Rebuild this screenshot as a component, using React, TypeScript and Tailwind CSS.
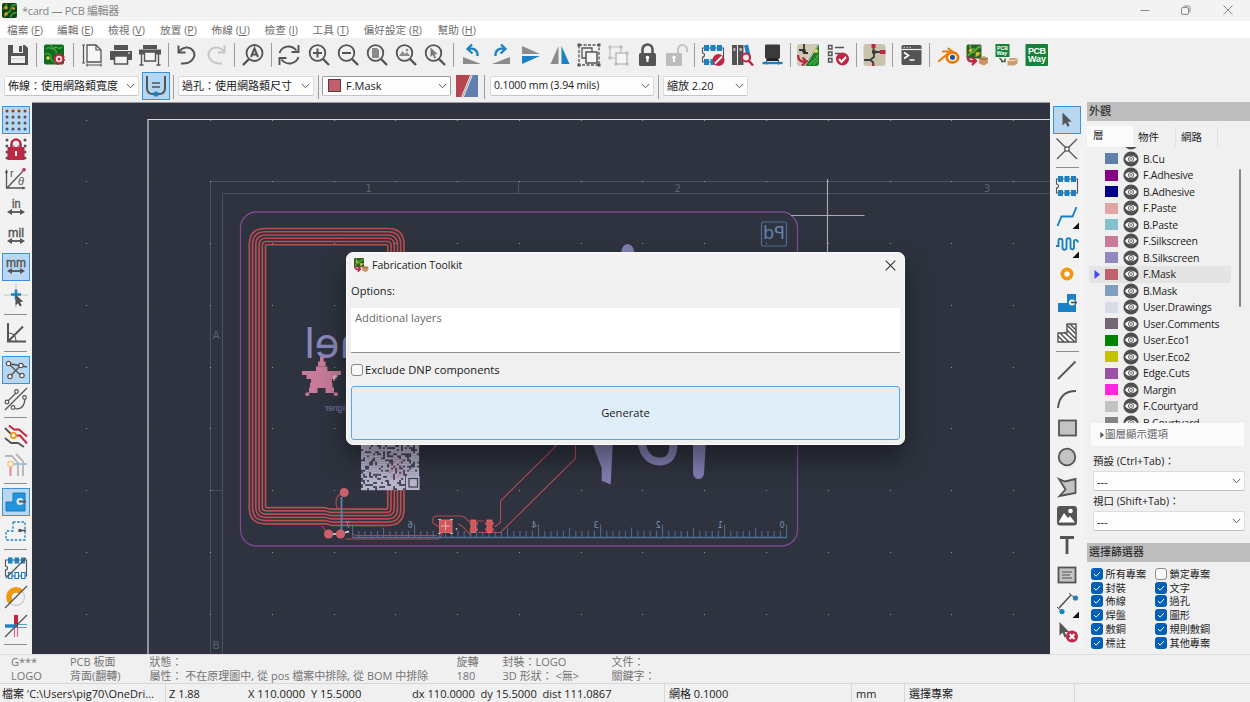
import React from "react";

const D = "#545454";
const B = "#1a81c4";
const R = "#bf2641";

type Kids = { children?: React.ReactNode };

function Ic({ children }: Kids) {
  return (
    <svg width="24" height="24" viewBox="0 0 24 24" fill="none" className="block shrink-0">
      {children}
    </svg>
  );
}

/* ---------- top toolbar icons ---------- */
const BoardArt = () => (
  <>
    <rect x="1" y="1.500" width="20" height="20" rx="2" fill="#0d6b1f" />
    <path d="M3 6c4-4 5 2 8-1s4 3 8-1M2 12c3-4 6 0 6 3s3 4 5 5M8 2c0 5 7 3 5 9" stroke="#46a63c" strokeWidth="1.300" />
    <circle cx="5" cy="15" r="1.800" fill="#e5d25c" />
  </>
);
const Magnifier = ({ children }: Kids) => (
  <Ic>
    <circle cx="10.500" cy="10" r="7.800" stroke={D} strokeWidth="1.800" />
    <path d="M16 16l6 6" stroke={D} strokeWidth="2.400" />
    {children}
  </Ic>
);
const Save = () => (
  <Ic>
    <path d="M2 2h17l3 3v17H2z" fill={D} />
    <path d="M7 2h10v8H7z" fill="#f0f0f0" />
    <path d="M13 3h3v6h-3z" fill={D} />
    <path d="M5 13h14v7H5z" fill="#f0f0f0" />
    <path d="M5 15h14v1.500H5z" fill={D} opacity=".15" />
  </Ic>
);
const BoardSetup = () => (
  <Ic>
    <BoardArt />
    <circle cx="16" cy="16" r="4" fill="#f7dfe2" stroke={R} strokeWidth="1.600" />
    <circle cx="16" cy="16" r="5.200" stroke={R} strokeWidth="1.600" strokeDasharray="2.040 2.040" />
    <circle cx="16" cy="16" r="1.500" fill={R} />
  </Ic>
);
const PageSet = () => (
  <Ic>
    <path d="M7 2h9l5 5v12H7z" stroke={D} strokeWidth="1.300" fill="#f6f6f6" />
    <path d="M16 2v5h5M3.500 2v18M2 2h3M2 20h3M7 22h14M7 20.500v3M21 20.500v3" stroke={D} strokeWidth="1.200" />
  </Ic>
);
const Print = () => (
  <Ic>
    <path d="M5 2h14v5H5z" fill={D} />
    <path d="M1 8h22v9H1z" fill={D} />
    <path d="M5.500 13h13v8h-13z" fill="#f3f3f3" stroke={D} strokeWidth="1.500" />
    <path d="M19 10h2" stroke="#fff" />
  </Ic>
);
const Plot = () => (
  <Ic>
    <path d="M5 2h14v4H5z" fill={D} />
    <path d="M1 6.500h22v5H1z" fill={D} />
    <path d="M6.500 9h11v9h-11z" fill="#f3f3f3" stroke={D} strokeWidth="1.400" />
    <path d="M3.500 11v11M20.500 11v11M1.500 22h4M18.500 22h4" stroke={D} strokeWidth="1.400" />
  </Ic>
);
const Undo = () => (
  <Ic>
    <path d="M3.500 2.500v7h7" stroke={D} strokeWidth="2" />
    <path d="M4 9C7 4 14 3 17.500 7c5 6-1 14.500-11.500 13.500" stroke={D} strokeWidth="2" />
  </Ic>
);
const Redo = () => (
  <svg width="24" height="24" viewBox="0 0 24 24" fill="none" className="block -scale-x-100">
    <path d="M3.500 2.500v7h7" stroke="#c6c6c6" strokeWidth="2" />
    <path d="M4 9C7 4 14 3 17.500 7c5 6-1 14.500-11.500 13.500" stroke="#c6c6c6" strokeWidth="2" />
  </svg>
);
const Find = () => (
  <Ic>
    <circle cx="13.500" cy="10" r="8" stroke={D} strokeWidth="1.800" />
    <path d="M8 16l-6 6" stroke={D} strokeWidth="2.400" />
    <path d="M10 14l3.500-8.500L17 14M11.300 11.500h4.500" stroke={D} strokeWidth="2" />
  </Ic>
);
const Refresh = () => (
  <Ic>
    <path d="M2.500 10C5 3 14 1 19.500 7.500M21.500 14C19 21 10 23 4.500 16.500" stroke={D} strokeWidth="1.900" />
    <path d="M21.500 2v7h-7M2.500 22v-7h7" stroke={D} strokeWidth="1.900" />
  </Ic>
);
const ZoomIn = () => <Magnifier><path d="M6 10h9M10.500 5.500v9" stroke={D} strokeWidth="2" /></Magnifier>;
const ZoomOut = () => <Magnifier><path d="M6 10h9" stroke={D} strokeWidth="2" /></Magnifier>;
const ZoomPage = () => <Magnifier><path d="M7 5h5l2 2v8H7z" fill="#8b8b8b" /></Magnifier>;
const ZoomObj = () => <Magnifier><path d="M5 13l3.500-5 2.500 3 2-2 3 4z" fill="#8b8b8b" /><circle cx="13" cy="7" r="1.300" fill="#8b8b8b" /></Magnifier>;
const ZoomSel = () => <Magnifier><path d="M7.500 4.500v9.500l2.300-2 1.700 3.500 1.700-.8-1.700-3.300 3-.4z" fill="#7b7b7b" /></Magnifier>;
const RotCCW = () => (
  <Ic>
    <path d="M3 14v7h18z" fill="#8b8b8b" />
    <path d="M17.500 13c.5-6-4-8.500-9-7" stroke={B} strokeWidth="2.300" />
    <path d="M12 1.500L7.500 6l5 4.500" stroke={B} strokeWidth="2.300" />
  </Ic>
);
const RotCW = () => (
  <Ic>
    <path d="M21 14v7H3z" fill="#8b8b8b" />
    <path d="M6.500 13c-.5-6 4-8.500 9-7" stroke={B} strokeWidth="2.300" />
    <path d="M12 1.500L16.500 6l-5 4.500" stroke={B} strokeWidth="2.300" />
  </Ic>
);
const FlipV = () => <Ic><path d="M3 3v8h18z" fill="#8b8b8b" /><path d="M3 21v-8h18z" fill={B} /></Ic>;
const FlipH = () => <Ic><path d="M2.500 21h8V3z" fill="#8b8b8b" /><path d="M21.500 21h-8V3z" fill={B} /></Ic>;
const Group = () => (
  <Ic>
    <path d="M2 2h20v20H2z" stroke={D} strokeWidth="1.300" strokeDasharray="3 1.500" />
    <path d="M5 5h10v10H5z" fill="#f0f0f0" stroke={D} strokeWidth="1.300" />
    <path d="M9 9h11v11H9z" fill="#f5f5f5" stroke={D} strokeWidth="1.500" />
    <path d="M.5.500h3v3h-3zM20.500.500h3v3h-3zM.5 20.500h3v3h-3zM20.500 20.500h3v3h-3z" fill={D} />
  </Ic>
);
const Ungroup = () => (
  <Ic>
    <path d="M4 4h11v11H4z" fill="#f0f0f0" stroke="#bdbdbd" strokeWidth="1.200" />
    <path d="M10 10h11v11H10z" fill="#f5f5f5" stroke="#bdbdbd" strokeWidth="1.500" />
    <path d="M2.500 2.500h3v3h-3zM13.500 2.500h3v3h-3zM2.500 13.500h3v3h-3zM19.500 8.500h3v3h-3zM8.500 19.500h3v3h-3zM19.500 19.500h3v3h-3z" fill="#bdbdbd" />
  </Ic>
);
const Lock = () => (
  <Ic>
    <path d="M7.500 11V6.500a5 5 0 0110 0V11" stroke={D} strokeWidth="2.600" />
    <rect x="4" y="10" width="17" height="13" rx="1.500" fill={D} />
    <path d="M12.500 14v5" stroke="#fff" strokeWidth="2" />
    <circle cx="12.500" cy="14.500" r="1.800" fill="#fff" />
  </Ic>
);
const Unlock = () => (
  <Ic>
    <path d="M14 11V6.500a4.500 4.500 0 019 0V9" stroke="#c2c2c2" strokeWidth="2" />
    <rect x="2" y="10" width="16" height="13" rx="1.500" fill="#bcbcbc" />
    <path d="M10 14v5" stroke="#fff" strokeWidth="2" />
    <circle cx="10" cy="14.500" r="1.800" fill="#fff" />
  </Ic>
);
const FpBody = () => (
  <>
    <path d="M1.500 5v5a2 2 0 010 4v5h21V5z" stroke={D} strokeWidth="1.100" />
    <path d="M3 2h5v6H3zM9.500 2h5v6h-5zM16 2h5v6h-5zM3 16h5v6H3zM9.500 16h5v6h-5zM16 16h5v6h-5z" fill={B} />
  </>
);
const FpEdit = () => (
  <Ic>
    <FpBody />
    <circle cx="17.500" cy="17" r="6" fill={R} />
    <path d="M14 20.500l7-7" stroke="#fff" strokeWidth="1.800" />
  </Ic>
);
const Library = () => (
  <Ic>
    <path d="M2 2h5v20H2zM8 2h5.500v20H8z" fill={D} />
    <path d="M3.400 5h2v3h-2zM9.500 5h2.300v3H9.500z" fill="#bbb" />
    <path d="M14 2.500l4-1 3 13-4 1z" fill={B} />
    <circle cx="16" cy="14.500" r="4" fill="#f3e7e9" stroke={R} strokeWidth="2" />
    <path d="M18.500 17.500l4.500 5" stroke={R} strokeWidth="2.500" />
  </Ic>
);
const Chip3D = () => (
  <Ic>
    <rect x="5" y="1.500" width="15" height="14" rx="1" fill="#3a3a3a" />
    <path d="M6.500 15h12v3h-12z" fill="#222" />
    <path d="M6.500 17.500v4M18.500 17.500v4" stroke="#333" />
    <path d="M2.500 20h20" stroke={B} strokeWidth="2.400" />
  </Ic>
);
const UpdatePcb = () => (
  <Ic>
    <rect x="1" y="1" width="22" height="22" rx="3" fill="#cfc7ae" />
    <path d="M23 1v19a3 3 0 01-3 3H9z" fill="#17822a" />
    <path d="M14 22c1-5 6-3 8-10M18 22c0-3 3-3 4-5" stroke="#56b244" strokeWidth="1.300" />
    <path d="M3 7h5v3h4M8 1v8" stroke="#333" strokeWidth="1.800" />
    <circle cx="8" cy="8" r="2" fill="#333" />
    <path d="M22 1L8 23" stroke="#fff" strokeWidth="2" />
    <path d="M22 1L8 23" stroke="#444" strokeWidth=".7" />
    <path d="M2 12c0 5 3 7 7 6.500M6.500 14.500l4 4L6 22.500" stroke={R} strokeWidth="2.300" />
    <circle cx="20" cy="8" r="2" fill="#e8d04f" />
  </Ic>
);
const Drc = () => (
  <Ic>
    <path d="M2.500 2.500h3.500V6H2.500zM2.500 9h3.500v3.500H2.500zM2.500 15.500h3.500V19H2.500z" stroke={D} strokeWidth="1.400" />
    <path d="M9 4.500h9M9 10.500h5" stroke={D} strokeWidth="1.400" />
    <circle cx="16.500" cy="16" r="6.500" fill={R} />
    <path d="M13 16l2.500 3 4.500-5" stroke="#fff" strokeWidth="2" />
  </Ic>
);
const Schematic = () => (
  <Ic>
    <rect x="1.500" y="1" width="22" height="22" rx="3" fill="#c9c2ac" />
    <path d="M11.500 1v7M12 9h8M12 9v5l-4 3H2M8 17l3 2v4" stroke="#3d3d3d" strokeWidth="1.800" />
    <path d="M9.500 1h4v4h-4zM18 7h5.500v4H18zM10.500 20h2v3h-2z" fill={R} />
    <circle cx="12" cy="9" r="2.200" fill="#3d3d3d" />
  </Ic>
);
const ConsoleIc = () => (
  <Ic>
    <rect x="2.500" y="2" width="20" height="20" rx="1.500" fill={D} />
    <path d="M2.500 6.500h20" stroke="#f0f0f0" strokeWidth="1.200" />
    <path d="M4.500 4.300H6M7.500 4.300H9M10.500 4.300H12" stroke="#ddd" />
    <path d="M5 9.500l4.500 3L5 15.500M10.500 17h5" stroke="#fff" strokeWidth="1.700" />
  </Ic>
);
const Blender = () => (
  <Ic>
    <path d="M3 18l11.500-9.500H7" stroke="#ea7d12" strokeWidth="2.200" strokeLinecap="round" strokeLinejoin="round" />
    <path d="M12.500 5.500l4.500 3.500" stroke="#ea7d12" strokeWidth="2" strokeLinecap="round" />
    <ellipse cx="16.500" cy="14.500" rx="5.600" ry="5" fill="#fff" stroke="#ea7d12" strokeWidth="2.800" />
    <circle cx="16.500" cy="14.300" r="2.600" fill="#1f5796" />
  </Ic>
);
const FabArt = () => (
  <>
    <rect x="1.500" y="1.500" width="15" height="14" rx="1.500" fill="#2f5f25" />
    <path d="M3 13c2-5 5-2 7-5s3-5 6-4M5 2c0 4 1 5 5 4M11 14c0-3 2-4 5-4" stroke="#58b33c" strokeWidth="1.700" />
    <circle cx="5.500" cy="7.500" r="1.700" fill="#e8b32a" />
    <circle cx="12.500" cy="11" r="2" fill="#e8b32a" />
    <path d="M14 15l5-2 4 2.500v4.500l-4 2.500-5-2z" fill="#c69763" />
    <path d="M14 15l5 1.500 4-1.500" stroke="#8f6237" />
    <path d="M3 13.500c-1 4 2 5.500 7 4.500M7.500 14.500l3.500 3.500L7 22" stroke={R} strokeWidth="2.400" />
  </>
);
const Fab = () => <Ic><FabArt /></Ic>;
const PcbWayBox = () => (
  <Ic>
    <rect x="1.500" y="1" width="14" height="13" fill="#15823a" />
    <g fill="#fff" fontFamily="Liberation Sans, sans-serif" fontWeight="700" fontSize="5.200">
      <text x="3" y="6.500">PCB</text><text x="2.700" y="11.800">Way</text>
    </g>
    <path d="M5.500 15l3 3M11 15.500v3H7" stroke="#4d5f3c" strokeWidth="1.600" />
    <path d="M13.500 17.500l3-2.500h7v5.500L20.500 22.500h-7z" fill="#c99f70" />
    <path d="M13.500 17.500h7l3-2.500" stroke="#f2dfc4" />
  </Ic>
);
const PcbWay = () => (
  <Ic>
    <rect x="1.500" y="1" width="22.500" height="22" rx="1" fill="#15823a" />
    <g fill="#fff" fontFamily="Liberation Sans, sans-serif" fontWeight="700">
      <text x="4" y="11" fontSize="9" textLength="18">PCB</text>
      <text x="4" y="19" fontSize="9" textLength="18">Way</text>
    </g>
  </Ic>
);

/* ---------- left toolbar icons ---------- */
const dots = [3, 9, 15, 21];
const Dots = () => (
  <>{dots.flatMap((x) => dots.map((y) => <circle key={x + "-" + y} cx={x} cy={y} r="1.500" fill={D} />))}</>
);
const GridIc = () => <Ic><Dots /></Ic>;
const GridLock = () => (
  <Ic>
    <Dots />
    <path d="M7 12V7a5 5 0 0110 0v5" stroke="#fff" strokeWidth="5" />
    <path d="M7.500 12V7a4.500 4.500 0 019 0v5" stroke={R} strokeWidth="2.600" />
    <rect x="3.500" y="10" width="17" height="13" rx="1" fill={R} />
    <path d="M12 14v5" stroke="#fff" strokeWidth="2" />
  </Ic>
);
const IconText = ({ t, x, w }: { t: string; x: number; w: number }) => (
  <Ic>
    <text x={x} y="11.500" fontSize="12" fontFamily="Liberation Sans, sans-serif" fill={D} stroke={D} strokeWidth=".35" textLength={w} lengthAdjust="spacingAndGlyphs">{t}</text>
    <path d="M5 16h14" stroke={D} strokeWidth="1.800" />
    <path d="M8 13L3 16l5 3zM16 13l5 3-5 3z" fill={D} />
  </Ic>
);
const Polar = () => (
  <Ic>
    <path d="M2.500 3v18h18M3 21L19 4" stroke={D} strokeWidth="1.300" />
    <path d="M1 6l1.500-4L4 6zM18 19.500l4 1.500-4 1.500z" fill={D} />
    <circle cx="20" cy="2.800" r="1.800" fill={R} />
    <g fill={D} fontFamily="Liberation Sans, sans-serif" fontSize="11"><text x="6" y="10">r</text><text x="14" y="18" fontStyle="italic">θ</text></g>
  </Ic>
);
const CursorIc = () => (
  <Ic>
    <path d="M12 0v24M0 11h24" stroke="#b9b9b9" strokeWidth=".8" />
    <path d="M12 5.500v10M7 10.500h10" stroke={B} strokeWidth="2.600" />
    <path d="M11.500 10.500v11l2.500-2.200 1.800 3.200 2-1-1.700-3.300 3-.7z" fill={D} />
  </Ic>
);
const Angle45 = () => (
  <Ic>
    <path d="M4 2v18.500h18M4 20.500L19 5.500" stroke={D} strokeWidth="2" />
    <path d="M4 12c5 0 8 3 8 8" stroke={D} strokeWidth="1.200" />
  </Ic>
);
const Rats = () => (
  <Ic>
    <path d="M4.500 5.500L18 18.500M6 18.500L17 7M4.500 5.500L23 9" stroke={D} strokeWidth="1.300" />
    <g fill="#fff" stroke={D} strokeWidth="1.200"><circle cx="4.500" cy="5.500" r="2.200" /><circle cx="17" cy="7.500" r="2.200" /><circle cx="6" cy="18.500" r="2.200" /><circle cx="18" cy="17.500" r="2.200" /></g>
  </Ic>
);
const RatsCurve = () => (
  <Ic>
    <path d="M2 16L12 6M1 23L23 1M9 21c8 3 12-2 12-11" stroke={D} strokeWidth="1.300" />
    <g fill="#fff" stroke={D} strokeWidth="1.200"><circle cx="3" cy="15" r="1.800" /><circle cx="12.500" cy="4.500" r="1.800" /><circle cx="9" cy="20.500" r="1.800" /><circle cx="20.500" cy="10.500" r="1.800" /></g>
  </Ic>
);
const Hilite = () => (
  <Ic>
    <path d="M5 1.500l5 4h5l8 7M10 11.500h6l7 8" stroke={R} strokeWidth="1.900" />
    <path d="M1 4l7 7M1 14l6 5h7l6 4" stroke={D} strokeWidth="1.800" />
    <circle cx="9.500" cy="11.500" r="2.600" fill="#fff" stroke="#f19811" strokeWidth="1.800" />
  </Ic>
);
const HiliteDim = () => (
  <Ic>
    <path d="M1 3h7l6 7v13M12 1l7 7v15" stroke="#b5b5b5" strokeWidth="1.800" />
    <path d="M8 11h15" stroke="#9fc3de" strokeWidth="2" />
    <path d="M6.500 14v9" stroke="#dd8b98" strokeWidth="2" />
    <circle cx="6.500" cy="11" r="2.600" fill="#fff" stroke="#f3c684" strokeWidth="1.500" />
  </Ic>
);
const ZonePath = "M9 3h12v18H2v-9h7z";
const ZoneFill = () => (
  <Ic>
    <path d={ZonePath} fill="#2196dc" stroke="#197cba" strokeWidth="1" />
    <circle cx="16" cy="11.500" r="3.500" fill="#d5ebf9" />
    <path d="M15 11.500h7" stroke={D} strokeWidth="2" />
  </Ic>
);
const ZoneOutline = () => (
  <Ic>
    <path d={ZonePath} stroke={B} strokeWidth="1.300" strokeDasharray="2.500 1.700" />
    <circle cx="16" cy="11.500" r="1.800" fill={D} /><path d="M15 11.500h7" stroke={D} strokeWidth="1.600" />
  </Ic>
);
const PadSketch = () => (
  <Ic>
    <path d="M1.500 4v6a2 2 0 010 4v6h21V4z" stroke={D} strokeWidth="1.100" />
    <path d="M4 1.500h4.500v6H4zM10.500 1.500H15v6h-4.500zM17 1.500h4v6h-4z" fill={B} />
    <path d="M4.500 16.500h3.500v6H4.500zM11 16.500h3.500v6H11zM17.500 16.500h3.500v6h-3.500z" fill="#fff" stroke={B} strokeWidth="1.200" />
    <path d="M2 22L22 2" stroke={D} strokeWidth="1.200" />
  </Ic>
);
const ViaSketch = () => (
  <Ic>
    <circle cx="12" cy="12" r="8.500" stroke="#bcbcbc" strokeWidth="1" />
    <path d="M5 19A9.500 9.500 0 1119 5l-4 4a4.200 4.200 0 10-6 6z" fill="#f19811" />
    <path d="M1 23L23 1" stroke={D} strokeWidth="1.200" />
  </Ic>
);
const TrackSketch = () => (
  <Ic>
    <path d="M12 1v12" stroke={R} strokeWidth="4" /><path d="M10.500 13v10M13.500 13v10" stroke="#dd6b7c" strokeWidth="1.200" />
    <path d="M1 12h11" stroke={B} strokeWidth="3.400" /><path d="M12 10.500h11M12 13.500h11" stroke="#5c9dcc" strokeWidth="1.200" />
    <path d="M1 23L23 1" stroke={D} strokeWidth="1.200" />
  </Ic>
);

/* ---------- right toolbar icons ---------- */
const More = () => <path d="M24 17.500V24h-6.500z" fill="#111" />;
const SelectIc = () => <Ic><path d="M7.500 4.500v13l3-2.700 2 4 2.200-1-2-4h4z" fill={D} /></Ic>;
const LocalRats = () => (
  <Ic>
    <path d="M1.500 1.500L22 22M22 2L2 22" stroke={D} strokeWidth="1.300" />
    <circle cx="12" cy="12" r="2.200" fill="#fff" stroke={D} strokeWidth="1.200" />
  </Ic>
);
const FpPlace = () => <Ic><FpBody /></Ic>;
const Route = () => <Ic><path d="M2.500 22l4-9.500h11l4-9.500" stroke={B} strokeWidth="1.900" /></Ic>;
const Tune = () => (
  <Ic><path d="M1 13h2.500V8c0-3 4-3 4 0v6.500c0 3 4 3 4 0V7.500c0-3 4-3 4 0V14c0 3 3.500 3 3.500 0V8.500c0-2.500 3.500-2 4 1" stroke={B} strokeWidth="1.900" /></Ic>
);
const ViaIc = () => <Ic><circle cx="12" cy="12" r="4.600" fill="#fff" stroke="#f19811" strokeWidth="3.800" /></Ic>;
const ZoneIc = () => (
  <Ic><path d="M12 3h9v18H3v-9h9z" fill={B} /><circle cx="17" cy="11.500" r="3" fill="#fff" /><path d="M16 11.500h6" stroke={D} strokeWidth="1.800" /></Ic>
);
const RuleArea = () => (
  <Ic>
    <path d="M3 12v9h18V3h-9v9z" fill="#fff" stroke={D} strokeWidth="1.400" />
    <path d="M12 4l9 9M15 3l6 6M12 9l9 9M9 11l11 10M5 12l9 9M3 15l6 6" stroke={D} strokeWidth="1.600" />
  </Ic>
);
const LineIc = () => <Ic><path d="M3 21L20.500 3.500" stroke={D} strokeWidth="1.800" /></Ic>;
const ArcIc = () => <Ic><path d="M3 21C4 10 10 4 21 4" stroke={D} strokeWidth="1.800" /></Ic>;
const RectIc = () => <Ic><rect x="4" y="4.500" width="17" height="15" fill="#c3c3c3" stroke={D} strokeWidth="1.800" /></Ic>;
const CircIc = () => <Ic><circle cx="12" cy="12" r="8.300" fill="#c3c3c3" stroke={D} strokeWidth="1.800" /></Ic>;
const PolyIc = () => <Ic><path d="M4 4l6 2.500L20.500 4v14L4.500 21 10.500 14.500z" fill="#c3c3c3" stroke={D} strokeWidth="1.800" /></Ic>;
const ImageIc = () => (
  <Ic>
    <rect x="2" y="2" width="20" height="19.500" rx="3" fill={D} />
    <path d="M3.500 18.500L9 9l4 5 2-2 5 6.500z" fill="#fff" /><circle cx="15.500" cy="7" r="2.300" fill="#fff" />
  </Ic>
);
const TextIc = () => <Ic><path d="M5 4.500h14M12 4v17" stroke={D} strokeWidth="2.800" /></Ic>;
const TextBox = () => (
  <Ic><rect x="3.500" y="4.500" width="17" height="15" fill="#c3c3c3" stroke={D} strokeWidth="1.800" /><path d="M7 9h10M7 12h8M7 15h10" stroke={D} strokeWidth="1.200" /></Ic>
);
const Dim = () => (
  <Ic>
    <path d="M4 16L16 3" stroke={D} strokeWidth="1.600" /><path d="M2 15l5 5M14 1l7 6" stroke={D} strokeWidth="1" />
    <circle cx="20.500" cy="6" r="2.600" fill={B} /><circle cx="7" cy="19.500" r="2.600" fill={B} />
  </Ic>
);
const Del = () => (
  <Ic>
    <path d="M4.500 1v13.500l3-3 2.200 5 2-1-2-4.600h4.500z" fill={D} />
    <circle cx="17" cy="15.500" r="6" fill={R} /><path d="M14.500 13l5 5M19.500 13l-5 5" stroke="#fff" strokeWidth="2" />
  </Ic>
);

/* ---------- bars ---------- */
const topIcons: (React.FC | null)[] = [
  Save, null, BoardSetup, null, PageSet, Print, Plot, null, Undo, Redo, null, Find, null, Refresh, ZoomIn, ZoomOut,
  ZoomPage, ZoomObj, ZoomSel, null, RotCCW, RotCW, FlipV, FlipH, Group, Ungroup, Lock, Unlock, null, FpEdit, Library,
  Chip3D, null, UpdatePcb, Drc, null, Schematic, null, ConsoleIc, null, Blender, Fab, PcbWayBox, PcbWay,
];
const InIc = () => <IconText t="in" x={8} w={8.500} />;
const MilIc = () => <IconText t="mil" x={4} w={16} />;
const MmIc = () => <IconText t="mm" x={2} w={20} />;
type V = { I: React.FC; on?: boolean; more?: boolean } | null;
const leftIcons: V[] = [
  { I: GridIc, on: true }, { I: GridLock }, { I: Polar }, { I: InIc }, { I: MilIc }, { I: MmIc, on: true }, { I: CursorIc }, null,
  { I: Angle45 }, null, { I: Rats, on: true }, { I: RatsCurve }, null, { I: Hilite }, { I: HiliteDim }, null,
  { I: ZoneFill, on: true }, { I: ZoneOutline }, null, { I: PadSketch }, { I: ViaSketch }, { I: TrackSketch }, null,
];
const rightIcons: V[] = [
  { I: SelectIc, on: true }, { I: LocalRats }, null, { I: FpPlace }, { I: Route, more: true }, { I: Tune, more: true },
  { I: ViaIc }, { I: ZoneIc }, { I: RuleArea }, null, { I: LineIc }, { I: ArcIc }, { I: RectIc }, { I: CircIc },
  { I: PolyIc }, { I: ImageIc }, { I: TextIc }, { I: TextBox }, { I: Dim, more: true }, { I: Del },
];

function VBar({ items, className }: { items: V[]; className: string }) {
  return (
    <div className={"flex shrink-0 flex-col bg-[#f2f2f2] pt-[3.500px] " + className}>
      {items.map((it, i) =>
        it ? (
          <div key={i} className="relative flex h-[29.300px] w-full items-center justify-center">
            <div className={"flex h-7 w-[28px] items-center justify-center " + (it.on ? "border border-[#3a93dd] bg-[#b9d7f0]" : "")}>
              <it.I />
            </div>
            {it.more && (
              <svg width="7" height="7" viewBox="17 17 7 7" className="absolute right-[5px] bottom-px"><More /></svg>
            )}
          </div>
        ) : (
          <div key={i} className="flex h-[7.500px] items-center justify-center">
            <div className="h-px w-[23px] bg-[#8e8e8e]" />
          </div>
        )
      )}
    </div>
  );
}

const Chevron = ({ c = "#555" }: { c?: string }) => (
  <svg width="9" height="6" viewBox="0 0 9 6" fill="none" className="shrink-0"><path d="M.8 1l3.700 3.700L8.200 1" stroke={c} strokeWidth="1" /></svg>
);
function Combo({ children, className }: Kids & { className: string }) {
  return (
    <div className={"flex h-5 shrink-0 items-center justify-between rounded-[2px] border border-b-[#c4c4c4] bg-[#fdfdfd] pr-[3px] pl-[3px] text-[11px] whitespace-nowrap text-[#1a1a1a] " + className}>
      <div className="flex items-center">{children}</div>
      <Chevron />
    </div>
  );
}
const TSep = ({ className = "" }: { className?: string }) => <div className={"-mt-px h-6 w-px shrink-0 bg-[#9c9c9c] " + className} />;

const menus: [string, string, string][] = [
  ["檔案", "F", "w-[50px]"], ["編輯", "E", "w-[51px]"], ["檢視", "V", "w-[52px]"], ["放置", "P", "w-[51.500px]"], ["佈線", "U", "w-[53px]"],
  ["檢查", "I", "w-[48px]"], ["工具", "T", "w-[51px]"], ["偏好設定", "R", "w-[74px]"], ["幫助", "H", "w-[50px]"],
];

/* ---------- canvas drawing ---------- */
const gridX = Array.from({ length: 16 }, (_, i) => 86.300 + i * 61.800);
const gridY = Array.from({ length: 9 }, (_, i) => 119.700 + i * 61.750);
const rings = [0, 1, 2, 3, 4, 5];
const ticks = Array.from({ length: 71 }, (_, i) => i);

function qrCells() {
  const out: { x: number; y: number; c: string }[] = [];
  let s = 7919;
  for (let r = 0; r < 22; r++)
    for (let c = 0; c < 29; c++) {
      s = (s * 1103515245 + 12345) % 2147483648;
      const finder = c >= 22 && r >= 15;
      if (!finder && s / 2147483648 < 0.7) {
        const pink = Math.abs(c - 17) < 4 && r > 3 && r < 16 && (c + r) % 3 === 0;
        out.push({ x: 361 + c * 2, y: 445 + r * 2.050, c: pink ? "#c98fa6" : "#bab7cf" });
      }
    }
  return out;
}
const qr = qrCells();
const star: [number, number, number, number][] = [
  [320, 357, 3.700, 5], [318, 361.500, 7.600, 5], [316, 366.500, 11.400, 5], [302, 371, 39, 4], [306.500, 374.500, 30, 4.500], [311, 378.500, 21, 4.500],
  [310, 383, 22.500, 5], [309, 387.500, 8.500, 5.500], [325.500, 387.500, 8.500, 5.500], [305.500, 392.500, 3.700, 3.300], [334, 392.500, 3.700, 3.300],
];

function ringPath(k: number) {
  const o = k * 3.250;
  const l = 249.300 + o, t = 228.500 + o, r = 404 - o, b = 524.800 - o, q = Math.max(16 - o * 0.95, 1);
  const j = 331 - o * 0.1;
  return `M${j} ${b + 0.5} H${r - q} Q${r} ${b + 0.5} ${r} ${b - q} V${t + q} Q${r} ${t} ${r - q} ${t} H${l + q} Q${l} ${t} ${l} ${t + q} V${b - q - 1} Q${l} ${b - 1} ${l + q} ${b - 1} H${j - 5} L${j} ${b + 0.5}`;
}

const BoardCanvas = () => (
  <svg viewBox="32 102 1018 552" width="1018" height="552" className="block h-[552px] w-[1018px] shrink-0 bg-[#2e333f]" fill="none">
    <path d="M32 102.500H1050" stroke="#9a9da4" />
    <path d="M148 654V119.500" stroke="#a9adba" strokeWidth="1.600" />
    <path d="M147.500 119.500H1050" stroke="#d4d6de" strokeWidth="1.200" />
    <g stroke="#4a5260">
      <path d="M210.500 654V181.500H1050M222.500 654V193.500H1050M518.500 181.500v12M827.500 181.500v12M210.500 490.500h12" />
    </g>
    <g fill="#5a6270" fontFamily="DejaVu Sans, sans-serif" fontSize="10.500" textAnchor="middle">
      <text x="368.500" y="191.500">1</text><text x="677.500" y="191.500">2</text><text x="987" y="191.500">3</text>
      <text x="216" y="339">A</text><text x="216" y="649">B</text>
    </g>
    {gridX.flatMap((x) => gridY.map((y) => <rect key={x + "_" + y} x={Math.round(x)} y={Math.round(y)} width="1" height="1" fill="#9498a2" />))}
    <rect x="240.500" y="212" width="557" height="334" rx="16" stroke="#7b4c8d" strokeWidth="1.300" />

    <g stroke="#b84d52" strokeWidth="1.700">{rings.map((k) => <path key={k} d={ringPath(k)} />)}</g>
    <path
      d="M575.500 445v13.500l-75 74H478M557 445l-56.500 56v21.500l-6 4.500M344 493l-5 2q-3 3-3 8 0 6 6 6.500h10M322 526l6 8M352 534l5 1.500h80M345 539h93l5-5M439 527l-6-4q-1-6 3-7h24q5 0 8 5h16M458 524c8 2 8 10 14 11"
      stroke="#b04a50"
      strokeWidth="1.100"
    />
    <path d="M341.500 497v33" stroke="#5f7fa8" strokeWidth="1.800" />
    <path d="M333 534h4M345 532.500l4-1" stroke="#e5e5ea" strokeWidth="1.300" />
    <g fill="#c9606b"><circle cx="344.200" cy="492.500" r="4.500" /><circle cx="328.600" cy="534" r="4.600" /><circle cx="340.500" cy="534" r="4.600" /></g>

    <g stroke="#4f7096" strokeWidth="1">
      <path d="M352.500 537.500H787" strokeWidth="1.500" />
      {ticks.map((i) => (
        <path key={i} d={`M${786.600 - i * 6.200} 537V${i % 10 === 0 ? 524.500 : i % 5 === 0 ? 527.500 : 531}`} />
      ))}
    </g>
    <g fill="#7e93b3" fontFamily="DejaVu Sans, sans-serif" fontSize="8">
      {[0, 1, 2, 3, 4, 6, 7].map((n) => (
        <text key={n} transform={`translate(${784.800 - n * 62},528) scale(-1,1)`}>{n}</text>
      ))}
    </g>

    <g fill="#d2555c" stroke="#e0797c" strokeWidth=".8">
      <rect x="439.500" y="520" width="12.500" height="12.500" /><rect x="471" y="520" width="4.500" height="12.500" /><rect x="487" y="520" width="5" height="12.500" />
    </g>
    <path d="M469.500 523.500h2.500M475 523.500h3M469.500 529.500h3M475 529.500h3M485 523.500h3M491 523.500h3M485 529.500h3M491 529.500h3" stroke="#d2555c" strokeWidth="2" />
    <path d="M441 526h9M445.500 521.500v9M438 519.500h3M450 519.500h3M438 533.500h3M450 533.500h3" stroke="#efc9c4" strokeWidth=".8" />
    <circle cx="456.500" cy="529" r="1" fill="#d6a4b4" />

    <g fill="#8a86bb" fontFamily="Inter, sans-serif" fontSize="42.500">
      <text transform="translate(304.500,357.500) scale(-1,1)" textAnchor="end">nel</text>
    </g>
    <g fill="#7c7ba6" fontFamily="Roboto, sans-serif" fontSize="9">
      <text transform="translate(325,411) scale(-1,1)" textAnchor="end">signer</text>
    </g>
    <g fill="#c77b98">{star.map((s, i) => <rect key={i} x={s[0]} y={s[1]} width={s[2]} height={s[3]} />)}</g>
    <path d="M338 376h-4v5" stroke="#e9dfe8" strokeWidth="1" />

    <rect x="361" y="445" width="58" height="45" fill="#484a5d" />
    {qr.map((q, i) => <rect key={i} x={q.x} y={q.y} width="2.100" height="2.150" fill={q.c} />)}
    <rect x="406" y="476" width="13.500" height="14" fill="#bab7cf" />
    <rect x="409" y="478.500" width="8.500" height="8.500" stroke="#3a3d4d" strokeWidth="1.200" />

    <rect x="761.500" y="222" width="25" height="24" rx="2" stroke="#4d7196" strokeWidth="1.200" />
    <text transform="translate(785,239) scale(-1,1)" fill="#6483ad" fontFamily="DejaVu Sans, sans-serif" fontSize="17" textLength="22" lengthAdjust="spacingAndGlyphs">Pd</text>

    <g fill="#827eb2">
      <path d="M621 253q1-8.500 6.500-9 6 .5 7 9z" />
      <path d="M591 440l10.700 28v12.700l9 3.800 2.200-44z" />
      <path d="M693 440v33q1 6 5.500 6t5.500-5l2-34z" />
    </g>
    <path d="M641.500 440c1 14 8 22 19.500 21.500 10-.5 13-8 12.500-21.500" stroke="#827eb2" strokeWidth="8" />
    <path d="M827.500 179v73M791 215.500h73.500" stroke="#a9acb4" strokeWidth="1.100" />
  </svg>
);

/* ---------- appearance panel ---------- */
const layers: [string, string][] = [
  ["", "bg-[#f0f0f0]"], ["B.Cu", "bg-[#6080ab]"], ["F.Adhesive", "bg-[#840084]"], ["B.Adhesive", "bg-[#000084]"], ["F.Paste", "bg-[#e0a5a5]"],
  ["B.Paste", "bg-[#84c1ca]"], ["F.Silkscreen", "bg-[#c77b98]"], ["B.Silkscreen", "bg-[#9089c0]"], ["F.Mask", "bg-[#c0606c]"],
  ["B.Mask", "bg-[#809fc0]"], ["User.Drawings", "bg-[#d8dce4]"], ["User.Comments", "bg-[#716674]"], ["User.Eco1", "bg-[#008400]"],
  ["User.Eco2", "bg-[#c2c200]"], ["Edge.Cuts", "bg-[#9a51a4]"], ["Margin", "bg-[#ff26e2]"], ["F.Courtyard", "bg-[#c2c2c2]"], ["B.Courtyard", "bg-[#848484]"],
];
const Eye = () => (
  <svg width="16" height="16" viewBox="0 0 16 16" fill="none" className="block shrink-0">
    <circle cx="8" cy="8" r="7.600" fill="#4f4f4f" />
    <path d="M2 8c3-4.300 9-4.300 12 0-3 4.300-9 4.300-12 0z" fill="#fff" />
    <circle cx="8" cy="8" r="2.500" fill="#fff" stroke="#555" strokeWidth="1" /><circle cx="8" cy="8" r="1" fill="#777" />
  </svg>
);
const Check = ({ on = true }: { on?: boolean }) => (
  <div className={"flex size-3 shrink-0 items-center justify-center rounded-[3px] " + (on ? "bg-[#005fb8]" : "border border-[#8a8a8a] bg-[#f8f8f8]")}>
    {on && <svg width="8" height="8" viewBox="0 0 8 8" fill="none"><path d="M1 4l2.200 2.200L7 2" stroke="#fff" strokeWidth="1" /></svg>}
  </div>
);
const filters: [string, string, boolean][] = [
  ["所有專案", "鎖定專案", false], ["封裝", "文字", true], ["佈線", "過孔", true], ["焊盤", "圖形", true], ["敷銅", "規則敷銅", true], ["標註", "其他專案", true],
];

function Panel() {
  return (
    <div className="flex w-[164px] shrink-0 flex-col bg-[#f0f0f0] text-[10.500px] text-[#1c1c1c]">
      <div className="ml-px flex h-[19px] items-center bg-[#bdbdbd] pb-[2px] pl-[2px] text-[11px]">外觀</div>
      <div className="flex h-[26px] items-end pl-px">
        <div className="flex h-[21px] w-[46px] items-center bg-[#fbfbfb] pb-[3px] pl-[6px]">層</div>
        <div className="flex h-[20px] w-[43px] items-center border-r border-[#e2e2e2] pl-[5px]">物件</div>
        <div className="flex h-[20px] w-[42px] items-center border-r border-[#e2e2e2] pl-[5px]">網路</div>
      </div>
      <div className="flex h-[276px] shrink-0 pl-[3px]">
        <div className="h-full w-[142px] overflow-hidden">
          <div className="-mt-[13px]">
            {layers.map(([n, c]) => (
              <div key={n} className={"flex h-[16.500px] items-center " + (n === "F.Mask" ? "bg-[#e4e4e4]" : "")}>
                <div className="flex w-4 justify-center">
                  {n === "F.Mask" && <svg width="6" height="9" viewBox="0 0 6 9"><path d="M.5 0L6 4.500.5 9z" fill="#4545ff" /></svg>}
                </div>
                <div className={"h-[11px] w-[13px] " + c} />
                <div className="w-[5px]" />
                <Eye />
                {n && <div className="pl-1 text-[10.500px] tracking-[-0.020em] whitespace-nowrap">{n}</div>}
              </div>
            ))}
          </div>
        </div>
        <div className="mt-[22px] ml-2 h-[138px] w-[2px] rounded bg-[#868686]" />
      </div>
      <div className="ml-[5px] flex h-[23px] w-[153px] shrink-0 items-center bg-[#fbfbfb] pl-[9px] text-[#636363]">
        <svg width="4" height="8" viewBox="0 0 5 8"><path d="M.5 0L5 4 .5 8z" fill="#555" /></svg>
        <span className="pl-px">圖層顯示選項</span>
      </div>
      <div className="mt-[9px] flex h-[13px] items-center pl-[7px] text-[10.500px]">預設 (Ctrl+Tab)：</div>
      <Combo className="mt-[3px] ml-[7px] w-[152px] border-[#dcdcdc]">---</Combo>
      <div className="mt-1 flex h-[13px] items-center pl-[7px] text-[10.500px]">視口 (Shift+Tab)：</div>
      <Combo className="mt-[3px] ml-[7px] w-[152px] border-[#dcdcdc]">---</Combo>
      <div className="mt-[12px] ml-px flex h-[19px] shrink-0 items-center bg-[#bdbdbd] pb-[2px] pl-[2px] text-[11px]">選擇篩選器</div>
      <div className="mt-[5px] flex flex-col pl-[5px] text-[10.200px]">
        {filters.map(([a, b, on]) => (
          <div key={a} className="flex h-[13.800px] items-center">
            <div className="flex w-[64px] items-center gap-[2.500px] whitespace-nowrap"><Check />{a}</div>
            <div className="flex items-center gap-[2.500px] whitespace-nowrap"><Check on={on} />{b}</div>
          </div>
        ))}
      </div>
    </div>
  );
}

const info: [string, string, string][] = [
  ["G***", "LOGO", "w-[59px]"], ["PCB 板面", "背面(翻轉)", "w-[79.500px]"],
  ["狀態：", "屬性： 不在原理圖中, 從 pos 檔案中排除, 從 BOM 中排除", "w-[307px]"],
  ["旋轉", "180", "w-[46px]"], ["封裝：LOGO", "3D 形狀： <無>", "w-[109px]"], ["文件：", "關鍵字：", "w-[80px]"],
];

export default function App() {
  return (
    <div lang="zh-Hant-TW" className="relative flex h-[702px] w-[1250px] flex-col overflow-hidden bg-[#f0f0f0] font-['Open_Sans','Noto_Sans_CJK_TC',sans-serif] leading-none text-[#1a1a1a]">
      <div className="flex h-[21px] shrink-0 items-center bg-[#f3f3f3] pl-[2px]">
        <svg width="15" height="15" viewBox="0 0 22 22" fill="none">
          <rect width="22" height="22" rx="3" fill="#123f14" />
          <path d="M4 20c0-9 8-3 9-11s5-6 9-6M1 8c4 0 5-2 6-7M13 21c0-6 4-7 9-7" stroke="#2f9b35" strokeWidth="2.500" />
          <circle cx="6" cy="7" r="2.500" fill="#e29b25" /><circle cx="6" cy="16" r="2.500" fill="#e29b25" /><circle cx="17" cy="8" r="2" fill="#e29b25" />
        </svg>
        <span className="pl-[5px] text-[11px] tracking-[-0.030em] whitespace-nowrap text-[#858585]">*card — PCB 編輯器</span>
        <svg width="100" height="20" viewBox="0 0 100 20" fill="none" stroke="#8b8b8b" className="mr-[11px] ml-auto">
          <path d="M1.500 9.500h9" /><rect x="42.500" y="6.500" width="7" height="7" rx="1.500" /><path d="M44.500 5h5q1.500 0 1.500 1.500v5" /><path d="M84.500 4.500l9 9M93.500 4.500l-9 9" />
        </svg>
      </div>

      <div className="flex h-[17px] shrink-0 items-center bg-white pt-[1.500px] pl-[7px] text-[10.700px] whitespace-nowrap text-[#6e6e6e]">
        {menus.map(([t, k, w]) => (
          <div key={k} className={"shrink-0 " + w}>{t} (<span className="underline">{k}</span>)</div>
        ))}
      </div>

      <div className="flex h-[34px] shrink-0 items-center pl-[3.400px]">
        {topIcons.map((I, i) =>
          I ? (
            <div key={i} className="flex w-[29.200px] shrink-0 justify-center"><I /></div>
          ) : (
            <div key={i} className="flex w-[7.600px] shrink-0 justify-center"><div className="h-6 w-px bg-[#9c9c9c]" /></div>
          )
        )}
      </div>

      <div className="flex h-[30px] shrink-0 items-start pt-[3.500px] pl-1">
        <Combo className="w-[135px] border-[#dcdcdc]">佈線：使用網路類寬度</Combo>
        <div className="-mt-[3.500px] ml-[3px] flex h-7 w-7 shrink-0 items-center justify-center border border-[#3a93dd] bg-[#b5d6f0]">
          <svg width="24" height="24" viewBox="0 0 24 24" fill="none">
            <path d="M3 2v12q0 6 6 6h6q6 0 6-6V2" stroke={D} strokeWidth="2" /><path d="M8 9h8M8 13h8" stroke={D} strokeWidth="1.300" /><circle cx="12" cy="20" r="2.600" fill={B} />
          </svg>
        </div>
        <TSep className="ml-[3px]" />
        <Combo className="ml-[4px] w-[136px] border-[#dcdcdc]">過孔：使用網路類尺寸</Combo>
        <TSep className="ml-[4px]" />
        <Combo className="ml-[3px] w-[129px] border-[#9a9a9a]"><span className="mr-[5px] ml-[2px] inline-block size-[13px] border border-[#5c3a3e] bg-[#c0606c]" />F.Mask</Combo>
        <svg width="22" height="22" viewBox="0 0 22 22" className="-mt-px ml-[5px] shrink-0"><path d="M0 0h22v22H0z" fill="#5f7fb0" /><path d="M0 0h15L6 22H0z" fill="#b5454f" /><path d="M15.500 0l-9 22" stroke="#f3f3f3" strokeWidth="2.500" /><path d="M15.500 0l-9 22" stroke="#777" strokeWidth=".7" /></svg>
        <TSep className="ml-[6px]" />
        <Combo className="ml-[5px] w-[164px] border-[#dcdcdc]"><span className="text-[10.500px] tracking-[-0.010em]">0.1000 mm (3.94 mils)</span></Combo>
        <TSep className="ml-[4px]" />
        <Combo className="ml-[4px] w-[85px] border-[#dcdcdc]">縮放 2.20</Combo>
      </div>

      <div className="flex h-[552px] shrink-0">
        <VBar items={leftIcons} className="w-8 pr-px" />
        <BoardCanvas />
        <VBar items={rightIcons} className="w-9 pr-[2px]" />
        <Panel />
      </div>

      <div className="flex h-[28.500px] shrink-0 border-t border-[#dedede] pl-[11px] text-[11px] whitespace-nowrap text-[#747474]">
        {info.map(([a, b, w]) => (
          <div key={b} className={"flex shrink-0 flex-col " + w}>
            <div className="flex h-[13.500px] items-center">{a}</div>
            <div className="flex h-[13.500px] items-center">{b}</div>
          </div>
        ))}
      </div>

      <div className="flex flex-1 items-stretch border-t border-[#d7d7d7] text-[11px] whitespace-nowrap text-[#1c1c1c] [&>div]:flex [&>div]:items-center [&>div]:pt-px">
        <div className="w-[166px] border-r border-[#d7d7d7] pl-[2px]">檔案 'C:\Users\pig70\OneDri...</div>
        <div className="w-[66px] pl-[3px]">Z 1.88</div>
        <div className="w-[164px] pl-[16px] text-[11.200px]">X 110.0000&nbsp; Y 15.5000</div>
        <div className="w-[269px] border-r border-[#d7d7d7] pl-[16px] text-[11.100px]">dx 110.0000&nbsp; dy 15.5000&nbsp; dist 111.0867</div>
        <div className="w-[187px] border-r border-[#d7d7d7] pl-[4px]">網格 0.1000</div>
        <div className="w-[53px] border-r border-[#d7d7d7] pl-[4px]">mm</div>
        <div className="w-[170px] border-r border-[#d7d7d7] pl-[4px]">選擇專案</div>
      </div>

      <div className="absolute top-[252px] left-[346px] flex h-[193px] w-[559px] flex-col rounded-[7px] border border-[#fafafa] bg-[#f0f0f0] shadow-[0_14px_28px_0_rgba(0,0,0,0.42)]">
        <div className="flex h-[27px] shrink-0 items-center rounded-t-[7px] bg-[#f3f3f3] pb-[3px] pl-[6px] text-[10.500px]">
          <svg width="16" height="16" viewBox="0 0 24 24" fill="none"><FabArt /></svg>
          <span className="pl-[3px]">Fabrication Toolkit</span>
          <svg width="11" height="11" viewBox="0 0 11 11" fill="none" className="mr-[8px] ml-auto"><path d="M.7.700l9.600 9.600M10.300.700L.7 10.300" stroke="#333" strokeWidth="1.100" /></svg>
        </div>
        <div className="flex h-[28px] shrink-0 items-center pb-[6px] pl-1 text-[11.100px]">Options:</div>
        <div className="ml-1 h-[45px] w-[549px] shrink-0 border-b border-[#8f8f8f] bg-white pt-1 pl-1 text-[11.200px] text-[#6a6a6a]">Additional layers</div>
        <div className="flex h-[33px] shrink-0 items-center gap-[2px] pl-1 text-[11.200px]"><Check on={false} />Exclude DNP components</div>
        <div className="ml-1 flex h-[54px] w-[549px] shrink-0 items-center justify-center rounded-[3px] border border-[#5ba5e0] bg-[#e0eef9] text-[11.200px]">Generate</div>
      </div>
    </div>
  );
}
